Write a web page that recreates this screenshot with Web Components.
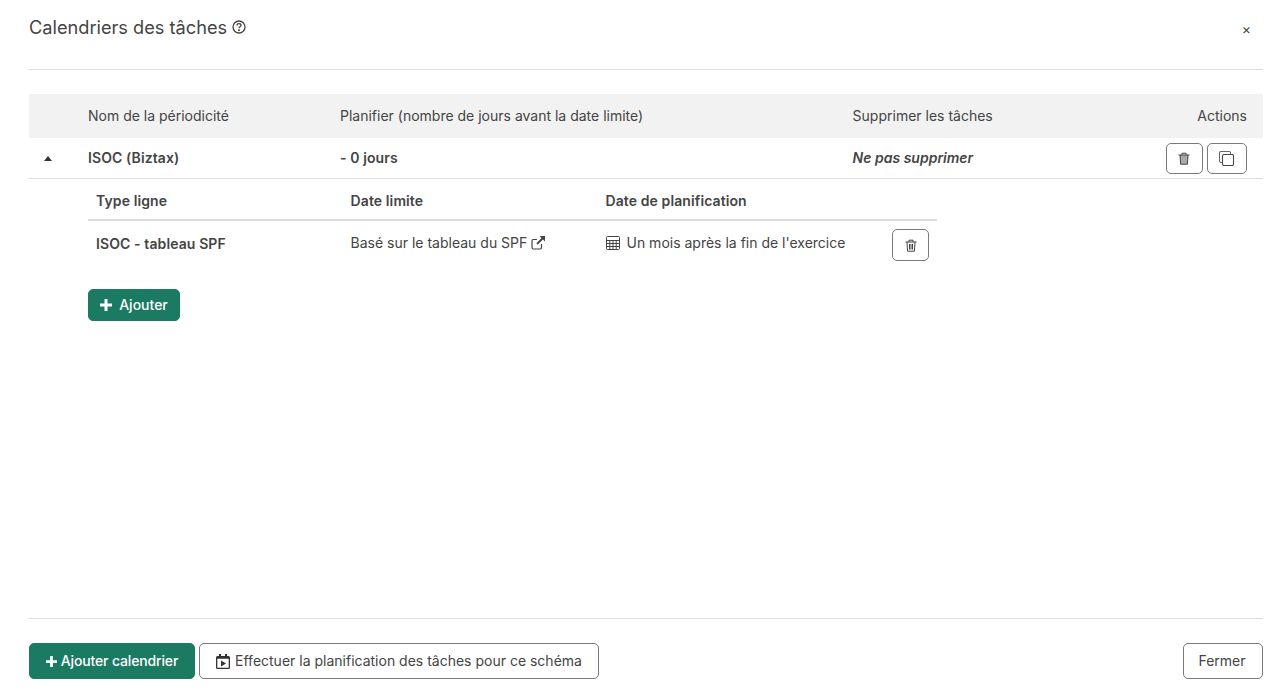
<!DOCTYPE html>
<html><head><meta charset="utf-8"><style>
html,body{margin:0;height:100%;background:#fff;overflow:hidden}
body{font:14px/20px Inter,"Liberation Sans",sans-serif;color:#444}
</style></head><body>
<task-dialog></task-dialog>
<script>
const I={
trash:'<svg width="12" height="13" viewBox="0 0 12 13" fill="none" stroke="#444" stroke-width="1"><path d="M.5 3h11M4 3V1.200h4V3M2 3l.6 9.200h6.800L10 3M4.500 5v5.500M6 5v5.500M7.500 5v5.500"/></svg>',
trashTop:'<svg width="12" height="13" viewBox="0 0 12 13" fill="none" stroke="#444" stroke-width="1"><path fill="#aaa" stroke="none" d="M2 3h8l-.6 9.200H2.600z"/><path d="M.5 3h11M4 3V1.200h4V3M2 3l.6 9.200h6.800L10 3"/></svg>',
copy:'<svg width="15" height="15" viewBox="0 0 15 15" fill="none" stroke="#444" stroke-width="1.100"><rect x="3.500" y="3.500" width="11" height="11" rx="1.500"/><path d="M3.500 11.500H2A1.500 1.500 0 0 1 .5 10V2A1.500 1.500 0 0 1 2 .5h8A1.500 1.500 0 0 1 11.500 2v1.500" stroke="#666"/></svg>',
ext:'<svg width="14" height="14" viewBox="0 0 14 14" fill="none"><path stroke="#444" stroke-width="1.200" d="M10.500 8v3.500a1.500 1.500 0 0 1-1.500 1.500H2.500A1.500 1.500 0 0 1 1 11.500V5a1.500 1.500 0 0 1 1.500-1.500H6"/><path stroke="#444" stroke-width="1.800" d="M13 1 6 8"/><path fill="#444" d="M8.500 0H14v5.500z"/></svg>',
cal:'<svg width="14" height="14" viewBox="0 0 14 14" fill="none" stroke="#444" stroke-width="1"><rect x=".5" y=".5" width="13" height="13" rx="1"/><path d="M.5 4.500h13M.5 7.500h13M.5 10.500h13M3.800 4.500v9M7 4.500v9M10.200 4.500v9"/></svg>',
plan:'<svg width="14" height="15" viewBox="0 0 14 15"><path fill="#333" d="M3 0h2v2h4V0h2v2h1.500A1.500 1.500 0 0 1 14 3.500v10a1.500 1.500 0 0 1-1.500 1.500h-11A1.500 1.500 0 0 1 0 13.500v-10A1.500 1.500 0 0 1 1.500 2H3zM1.300 4.700v8.800c0 .1.100.2.200.2h11c.1 0 .2-.1.200-.2V4.700z"/><path fill="#333" d="M5 6.500l5 3-5 3z"/></svg>',
help:'<svg width="14" height="14" viewBox="0 0 14 14" fill="none" stroke="#444" stroke-width="1.300"><circle cx="7" cy="7" r="6"/><path d="M5 5.500C5 4.300 6 3.700 7 3.700s2 .7 2 1.700c0 1.400-2 1.500-2 2.900"/><circle cx="7" cy="10.300" r=".4" fill="#444"/></svg>',
plus:s=>`<svg width="${s}" height="${s}" viewBox="0 0 12 12"><path fill="#fff" d="M4.500 0h3v4.500H12v3H7.500V12h-3V7.500H0v-3h4.500z"/></svg>`};
function def(n,css,html){customElements.define(n,class extends HTMLElement{constructor(){super();this.attachShadow({mode:'open'}).innerHTML='<style>'+css+'</style>'+(typeof html==='function'?html(this):html)}})}
def('ui-btn',`:host{display:inline-flex;align-items:center;justify-content:center;box-sizing:border-box;border:1px solid #7a7a7a;border-radius:5px;background:#fff;color:#444;gap:5px;font-size:14px;white-space:nowrap}
:host([primary]){background:#1a7a62;border-color:#1a7a62;color:#fff;font-weight:450}`,'<slot></slot>');
def('task-dialog',`:host{display:flex;flex-direction:column;height:700px;box-sizing:border-box;padding:0 24px 21px 29px;font-size:14px}
header{flex:none;display:flex;justify-content:space-between;align-items:flex-start;padding-top:16px;box-sizing:border-box;border-bottom:1px solid #ddd;height:70px}
h1{margin:0;font-size:18.200px;font-weight:400;line-height:22px;display:flex;align-items:center;gap:4.500px;color:#444}
.x{font-size:14px;margin:2px 12px 0 0;line-height:22px}
main{flex:1;padding-top:24px}
.head,.row{display:grid;grid-template-columns:59px 252px 512.600px 1fr auto;align-items:center}
.head{height:44px;background:#f2f2f2;padding-right:16px}
.row{height:40px;border-bottom:1px solid #ddd;padding-right:16px;font-weight:600;letter-spacing:.1px}
.row i{letter-spacing:0}
.acts{display:flex;gap:4px}
.acts ui-btn{height:31px}
.car{width:0;height:0;border:4.500px solid transparent;border-top:0;border-bottom:5px solid #333;margin-left:15px}
.sub{margin-left:59px;width:849px}
.sh,.sr{display:grid;grid-template-columns:254.600px 254.900px 1fr auto;padding-left:8px;padding-right:8px;align-items:center}
.sh{height:42px;font-weight:600;border-bottom:2px solid #ddd;box-sizing:border-box;padding-top:4px;letter-spacing:.1px}
.sr{height:48px}.sr b{font-weight:600;margin-bottom:3px;letter-spacing:.1px}
.sr span{display:flex;align-items:center;gap:3.500px;margin-bottom:4px}
.sr span.c{gap:6px;padding-left:1px}
.add{margin:20px 0 0 59px}
footer{border-top:1px solid #ddd;padding-top:24px;display:flex;gap:4px;flex:none}
.sp{flex:1}`,()=>`<header><h1>Calendriers des tâches ${I.help}</h1><span class="x">×</span></header>
<main>
<div class="head"><span></span><span>Nom de la périodicité</span><span>Planifier (nombre de jours avant la date limite)</span><span>Supprimer les tâches</span><span>Actions</span></div>
<div class="row"><span class="car"></span><span>ISOC (Biztax)</span><span>- 0 jours</span><i>Ne pas supprimer</i><div class="acts"><ui-btn style="width:37px;padding-right:1px">${I.trashTop}</ui-btn><ui-btn style="width:40px;padding-right:1px">${I.copy}</ui-btn></div></div>
<div class="sub"><div class="sh"><span>Type ligne</span><span>Date limite</span><span>Date de planification</span><span></span></div>
<div class="sr"><b>ISOC - tableau SPF</b><span>Basé sur le tableau du SPF ${I.ext}</span><span class="c">${I.cal} Un mois après la fin de l'exercice</span><ui-btn style="width:37px;height:32px">${I.trash}</ui-btn></div></div>
<div class="add"><ui-btn primary style="width:92px;height:32px;gap:7px">${I.plus(12)}<span>Ajouter</span></ui-btn></div>
</main>
<footer><ui-btn primary style="width:166px;height:36px;gap:4px">${I.plus(11)}<span style="letter-spacing:-.15px">Ajouter calendrier</span></ui-btn><ui-btn style="width:400px;height:36px">${I.plan}<span>Effectuer la planification des tâches pour ce schéma</span></ui-btn><span class="sp"></span><ui-btn style="width:80px;height:36px;padding-right:2px">Fermer</ui-btn></footer>`);
</script></body></html>
